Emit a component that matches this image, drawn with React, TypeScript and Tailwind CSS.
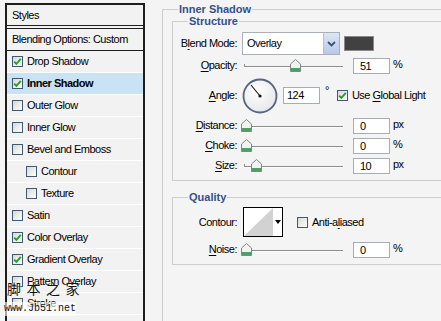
import React from "react";

const Check = ({ checked }: { checked?: boolean }) => (
  <div className="w-[11px] h-[11px] shrink-0 border border-[#3f5873] bg-linear-to-br from-[#d8d8d2] to-white flex items-center justify-center">
    {checked && (
      <svg width="9" height="9" viewBox="0 0 9 9">
        <path d="M1.2 4.6 L3.4 6.8 L7.8 1.8" fill="none" stroke="#23a023" strokeWidth="1.9" />
      </svg>
    )}
  </div>
);

const Thumb = () => (
  <svg width="11" height="13" viewBox="0 0 11 13">
    <path d="M5.5 0.5 L10.5 5 V12.5 H0.5 V5 Z" fill="#f1f3f1" stroke="#808780" />
    <rect x="1" y="9" width="9" height="3" fill="#4f9e66" />
  </svg>
);

const Slider = ({ at }: { at: number }) => (
  <div className="relative w-[102px] h-[17px] shrink-0">
    <div className="absolute left-[3px] right-0 top-[9px] h-[1px] bg-[#8c8c8c] shadow-[0_1px_0_#ffffff]" />
    <div className="absolute left-[3px] top-[7px] w-[1px] h-[3px] bg-[#8c8c8c]" />
    <div className="absolute top-[2px]" style={{ left: at - 5 }}>
      <Thumb />
    </div>
  </div>
);

const Num = ({ v }: { v: string }) => (
  <div className="w-[37px] h-[16px] shrink-0 border border-[#a7adb5] bg-white pl-[6px] text-[11px] leading-[14px] text-black">
    {v}
  </div>
);

const Label = ({ children }: { children: React.ReactNode }) => (
  <div className="w-[64px] shrink-0 text-right text-[11px] text-black">{children}</div>
);

const U = ({ children }: { children: React.ReactNode }) => <span className="underline underline-offset-2">{children}</span>;

const SliderRow = ({ label, at, v, unit, cls }: { label: React.ReactNode; at: number; v: string; unit: string; cls: string }) => (
  <div className={`flex items-center h-[17px] ${cls}`}>
    <Label>{label}</Label>
    <div className="ml-[4px]">
      <Slider at={at} />
    </div>
    <div className="ml-[10px]">
      <Num v={v} />
    </div>
    <div className="ml-[3px] text-[11px] -mt-[3px]">{unit}</div>
  </div>
);

const rows: { name: string; checked?: boolean; sel?: boolean; indent?: boolean }[] = [
  { name: "Drop Shadow", checked: true },
  { name: "Inner Shadow", checked: true, sel: true },
  { name: "Outer Glow" },
  { name: "Inner Glow" },
  { name: "Bevel and Emboss" },
  { name: "Contour", indent: true },
  { name: "Texture", indent: true },
  { name: "Satin" },
  { name: "Color Overlay", checked: true },
  { name: "Gradient Overlay", checked: true },
  { name: "Pattern Overlay" },
  { name: "Stroke" },
];

export default function App() {
  return (
    <div className="relative w-[441px] h-[321px] overflow-hidden bg-[#f4f4f4] flex font-['Liberation_Sans',Arial,sans-serif] tracking-[-0.5px] text-black">
      {/* Left styles list */}
      <div className="w-[145px] shrink-0 pl-[5px] pt-[3px]">
        <div className="w-[140px] h-[330px] border-x-2 border-[#1e1e1e] bg-[#f2f2f2]">
          <div className="border-t-2 border-b border-[#1e1e1e] h-[23px] pl-[5px] flex items-center text-[11px]">Styles</div>
          <div className="h-[2px]" />
          <div className="border-y border-[#1e1e1e] h-[23px] pl-[5px] flex items-center text-[11px]">Blending Options: Custom</div>
          {rows.map((r) => (
            <div
              key={r.name}
              className={`h-[22px] border-b border-white flex items-center gap-[4px] text-[11px] ${r.indent ? "pl-[19px]" : "pl-[5px]"} ${r.sel ? "bg-[#c9e3f5] font-bold" : ""}`}
            >
              <Check checked={r.checked} />
              <span>{r.name}</span>
            </div>
          ))}
        </div>
      </div>

      {/* Right settings */}
      <div className="pl-[17px] pt-[3px]">
        <fieldset className="w-[320px] h-[330px] border-l border-t border-[#cdcdcd] pl-[9px]">
          <legend className="ml-[6px] px-[1px] text-[11px] leading-[12px] font-bold text-[#34508a] tracking-normal">Inner Shadow</legend>
          <fieldset className="w-[300px] border-l border-t border-b border-[#cdcdcd] pb-[6px]">
            <legend className="ml-[15px] px-[1px] text-[11px] leading-[12px] font-bold text-[#34508a] tracking-normal">Structure</legend>
            {/* Blend mode */}
            <div className="flex items-center h-[23px] mt-[5px]">
              <Label>
                B<U>l</U>end Mode:
              </Label>
              <div className="ml-[5px] w-[98px] h-[23px] border border-[#a9b0b8] bg-white flex items-stretch">
                <div className="flex-1 pl-[4px] text-[11px] flex items-center">Overlay</div>
                <div className="w-[16px] bg-linear-to-b from-[#dde6f5] to-[#b7c8e6] border-l border-[#b5c2d6] flex items-center justify-center">
                  <svg width="9" height="6" viewBox="0 0 9 6">
                    <path d="M1 1 L4.5 4.5 L8 1" fill="none" stroke="#3d5079" strokeWidth="1.8" />
                  </svg>
                </div>
              </div>
              <div className="ml-[4px] w-[30px] h-[15px] bg-[#414141] border border-[#8a8a8a]" />
            </div>
            <SliderRow cls="mt-[2px]" label={<><U>O</U>pacity:</>} at={54} v="51" unit="%" />
            {/* Angle */}
            <div className="flex items-center h-[35px] mt-[4px]">
              <Label>
                <U>A</U>ngle:
              </Label>
              <div className="ml-[5px]">
                <svg width="36" height="36" viewBox="0 0 36 36">
                  <defs>
                    <radialGradient id="dial" cx="40%" cy="35%" r="70%">
                      <stop offset="0%" stopColor="#ffffff" />
                      <stop offset="100%" stopColor="#e4e6ea" />
                    </radialGradient>
                  </defs>
                  <circle cx="18" cy="18" r="16.5" fill="url(#dial)" stroke="#57647f" strokeWidth="1.8" />
                  <line x1="18" y1="18" x2="9" y2="7" stroke="#111" strokeWidth="1.1" />
                  <circle cx="18" cy="18" r="1.6" fill="#111" />
                </svg>
              </div>
              <div className="ml-[5px]">
                <div className="w-[37px] h-[17px] border border-[#a7adb5] bg-white pl-[3px] text-[11px] leading-[15px]">124</div>
              </div>
              <div className="ml-[5px] self-start mt-[7px] text-[11px] leading-[11px]">°</div>
              <div className="ml-[8px]">
                <Check checked />
              </div>
              <div className="ml-[4px] text-[11px]">
                Use <U>G</U>lobal Light
              </div>
            </div>
            <SliderRow cls="mt-[4px]" label={<><U>D</U>istance:</>} at={5} v="0" unit="px" />
            <SliderRow cls="mt-[3px]" label={<><U>C</U>hoke:</>} at={5} v="0" unit="%" />
            <SliderRow cls="mt-[3px]" label={<><U>S</U>ize:</>} at={15} v="10" unit="px" />
          </fieldset>

          <fieldset className="mt-[10px] w-[300px] border-l border-t border-b border-[#cdcdcd] pb-[6px]">
            <legend className="ml-[15px] px-[1px] text-[11px] leading-[12px] font-bold text-[#34508a] tracking-normal">Quality</legend>
            <div className="flex items-center h-[30px] mt-[4px]">
              <Label>Contour:</Label>
              <div className="ml-[6px] w-[40px] h-[30px] border border-black bg-white flex">
                <svg width="29" height="28" viewBox="0 0 29 28" className="shrink-0">
                  <polygon points="0,28 29,0 29,28" fill="#d2d2d2" />
                </svg>
                <div className="flex-1 flex items-center justify-center">
                  <svg width="6" height="4" viewBox="0 0 6 4">
                    <polygon points="0,0 6,0 3,4" fill="#000" />
                  </svg>
                </div>
              </div>
              <div className="ml-[14px]">
                <Check />
              </div>
              <div className="ml-[4px] text-[11px]">
                Anti-a<U>l</U>iased
              </div>
            </div>
            <SliderRow cls="mt-[4px]" label={<><U>N</U>oise:</>} at={5} v="0" unit="%" />
          </fieldset>
        </fieldset>
      </div>

      {/* Watermark */}
      <div className="absolute left-[7px] top-[279px] text-[14px] leading-[18px] text-[#111] tracking-[1.2px] font-['Noto_Sans_CJK_SC',sans-serif] [text-shadow:0_0_2px_#fff]">
        脚 本 之 家
      </div>
      <div className="absolute left-[4px] top-[302px] text-[10px] leading-[14px] text-[#111] tracking-normal font-['Liberation_Mono',monospace] bg-white/60 [text-shadow:0_0_2px_#fff]">
        www.Jb51.net
      </div>
    </div>
  );
}
